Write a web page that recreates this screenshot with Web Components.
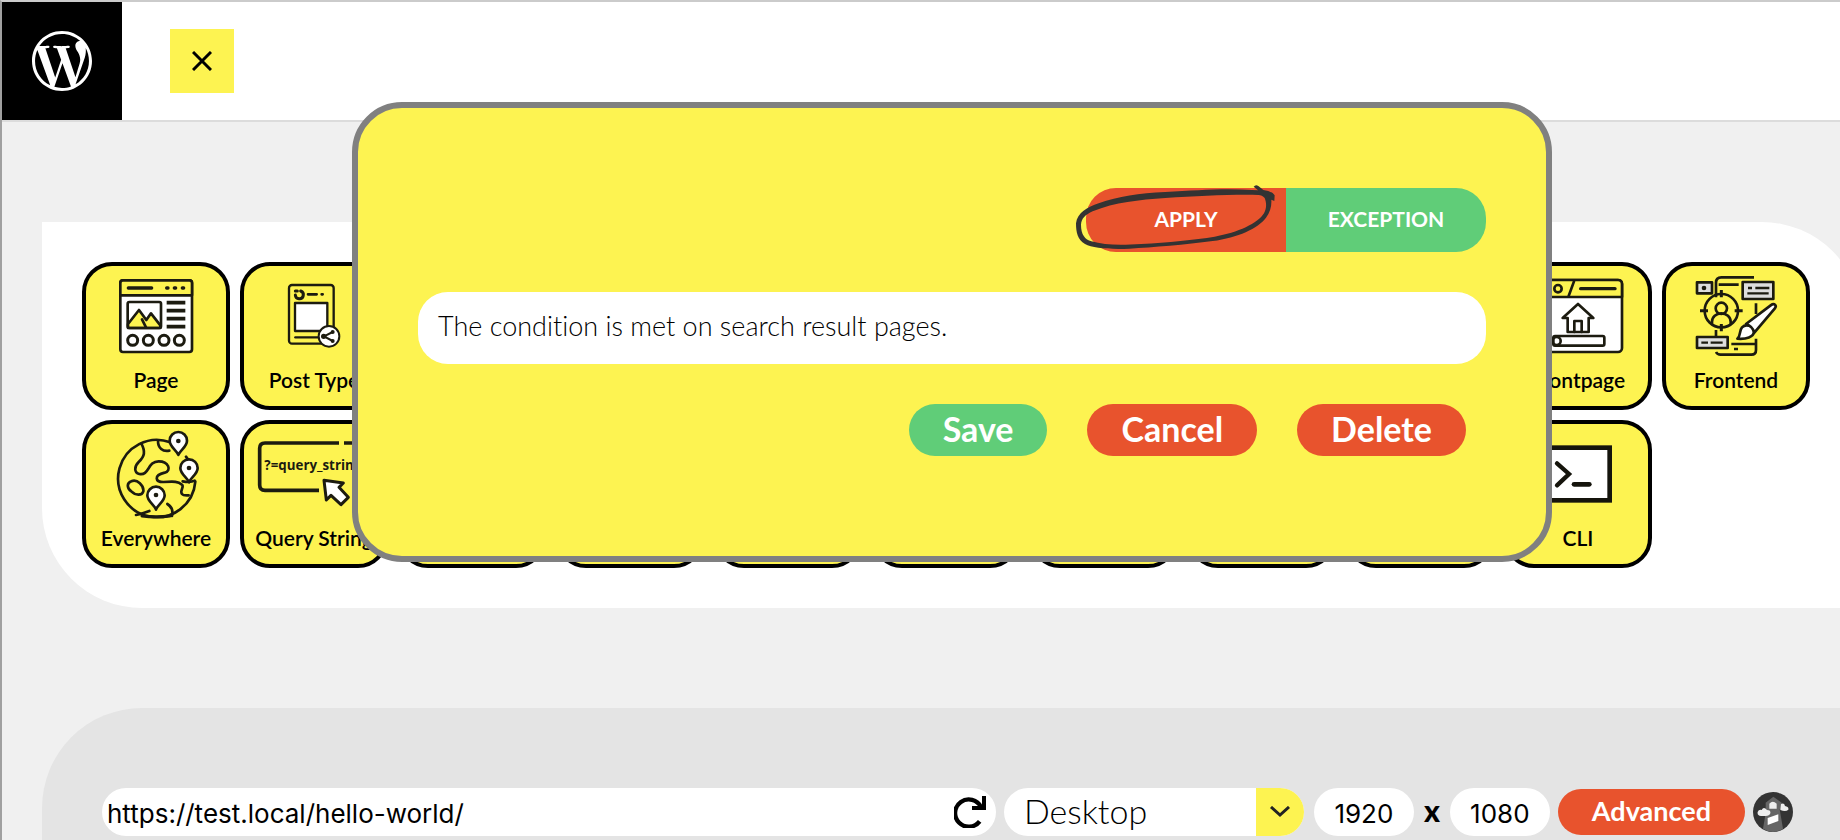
<!DOCTYPE html>
<html lang="en">
<head>
<meta charset="utf-8">
<title>Conditions</title>
<style>
    :root {
        --yellow: #fdf351;
        --red: #e8532d;
        --green: #60cd78;
        --page-bg: #f0f0f0;
        --preview-bg: #e4e4e4;
    }
    html {
        height: 100%;
        overflow: hidden;
        background: var(--page-bg);
    }
    body {
        margin: 0;
        min-height: 100%;
        box-sizing: border-box;
        border-top: 2px solid #cbcbcb;
        border-left: 2px solid #a0a0a0;
        font-family: Lato, "Open Sans", sans-serif;
        font-variant-ligatures: none;
        color: #000;
    }
</style>
</head>
<body>

<condition-app></condition-app>

<template id="icon-page">
    <svg viewBox="78 78 420 276" fill="none" stroke="#1c1b10" stroke-width="8" stroke-linecap="round" stroke-linejoin="round">
        <rect x="181" y="121" width="215" height="215" rx="8" fill="#fff"/>
        <path d="M181 166v-37q0-8 8-8h199q8 0 8 8v37z" fill="#fdf351"/>
        <path d="M205 144h70M320 144h4M343 144h4M367 144h4" stroke-width="10"/>
        <path d="M320 188h56M320 212h56M320 236h56M320 260h56" stroke-width="11" stroke-linecap="butt"/>
        <path d="M204 264v-12l33-42 22 30 14-20 28 36v8z" fill="#fdf351"/>
        <path d="M258 262l-12-24"/>
        <rect x="203" y="186" width="100" height="78" rx="5"/>
        <g stroke-width="9">
            <circle cx="218" cy="301" r="15"/><circle cx="265" cy="301" r="15"/>
            <circle cx="312" cy="301" r="15"/><circle cx="358" cy="301" r="15"/>
        </g>
    </svg>
</template>

<template id="icon-post-type">
    <svg viewBox="552 78 420 276" fill="none" stroke="#1c1b10" stroke-width="7" stroke-linecap="round" stroke-linejoin="round">
        <rect x="687" y="135" width="134" height="176" rx="9"/>
        <path d="M722 153a12 12 0 1 1-16 12M706 153h6" stroke-width="9"/>
        <path d="M744 163h26M785 163h3" stroke-width="8"/>
        <rect x="705" y="189" width="97" height="84" fill="#fff"/>
        <path d="M706 292h70"/>
        <circle cx="807" cy="289" r="31" fill="#fff" stroke-width="6"/>
        <path d="M818 276l-26 13 26 14" stroke-width="6"/>
        <g fill="#1c1b10" stroke="none"><circle cx="818" cy="276" r="6"/><circle cx="791" cy="289" r="8"/><circle cx="818" cy="303" r="6"/></g>
    </svg>
</template>

<template id="icon-everywhere">
    <svg viewBox="78 42 420 276" fill="none" stroke="#1c1b10" stroke-width="8" stroke-linecap="round" stroke-linejoin="round">
        <path d="M331 97a116 116 0 1 0 75 118M378 140q8 10 10 16"/>
        <path d="M244 101c13 24 10 38-8 55-14 14-14 32 2 36 30 6 24-38 58-38 30 0 40 28 18 34-34 8-28 28-4 28 34-2 44-2 56 8 8 8-8 16 0 28 4 5 10 4 20 4M294 94c0 20 14 32 34 28M404 212q-12 6-36 2"/>
        <path d="M214 214c18-8 38 14 36 30-4 14-24 12-36 0-12-8-16-24 0-30zM228 315q20-4 40-12M322 282q20 12 14 36"/>
        <path d="M246 318q42 5 84 0" stroke-width="9"/>
        <g fill="#fff">
            <path d="M355 135c-4-14-26-24-26-43a26 26 0 0 1 52 0c0 19-22 29-26 43z"/>
            <path d="M387 217c-4-14-26-24-26-43a26 26 0 0 1 52 0c0 19-22 29-26 43z"/>
            <path d="M288 299c-4-14-26-24-26-43a26 26 0 0 1 52 0c0 19-22 29-26 43z"/>
        </g>
        <g fill="#1c1b10" stroke="none"><circle cx="355" cy="93" r="7"/><circle cx="387" cy="174" r="7"/><circle cx="288" cy="255" r="7"/></g>
    </svg>
</template>

<template id="icon-query-string">
    <svg viewBox="552 42 420 276" fill="none" stroke="#1c1b10" stroke-width="11" stroke-linecap="butt" stroke-linejoin="round">
        <path d="M837 99H615q-16 0-16 16v110q0 16 16 16h162M852 99h66q16 0 16 16v110q0 16-16 16h-30"/>
        <text x="613" y="180" font-family="'Open Sans', sans-serif" font-size="40" font-weight="700" fill="#1c1b10" stroke="none">?=query_string</text>
        <path d="M792 211l58 8-13 13 28 30-22 22-30-28-14 14z" fill="#fff" stroke-width="9"/>
    </svg>
</template>

<template id="icon-frontpage">
    <svg viewBox="24 168 420 276" fill="none" stroke="#1c1b10" stroke-width="8" stroke-linecap="round" stroke-linejoin="round">
        <rect x="104" y="210" width="262" height="216" rx="12" fill="#fff"/>
        <path d="M104 261v-39q0-12 12-12h238q12 0 12 12v39z" fill="#fdf351"/>
        <circle cx="174" cy="236" r="11"/>
        <path d="M222 214l-16 44"/>
        <path d="M242 236h103" stroke-width="10"/>
        <path d="M203 324h-15l46-42 46 42h-14v42h-63z" fill="#fff"/>
        <path d="M223 366v-33h22v33"/>
        <rect x="160" y="378" width="153" height="29" rx="5"/>
        <circle cx="170" cy="393" r="12"/>
    </svg>
</template>

<template id="icon-frontend">
    <svg viewBox="498 168 420 276" fill="none" stroke="#1c1b10" stroke-width="8" stroke-linecap="butt" stroke-linejoin="round">
        <path d="M648 262v-44q0-16 16-16h98M656 224h60M768 280v32M768 386v34q0 14-14 14h-92q-10 0-14-8M694 402h74M702 417h12M648 360v22"/>
        <rect x="591" y="217" width="45" height="33" fill="#ddd"/>
        <rect x="728" y="216" width="92" height="51" fill="#ddd"/>
        <path d="M744 234h12M766 234h42M742 250h64" stroke-width="7"/>
        <circle cx="612" cy="234" r="7" fill="#1c1b10" stroke="none"/>
        <rect x="591" y="381" width="92" height="33" fill="#ddd"/>
        <path d="M604 398h20M632 398h36" stroke-width="7"/>
        <circle cx="664" cy="302" r="50"/>
        <path d="M664 240v22M664 342v22M600 302h24M704 302h24" stroke-width="9"/>
        <circle cx="664" cy="295" r="17"/>
        <path d="M636 343v-8a28 25 0 0 1 56 0v8"/>
        <path d="M712 386c12-10 4-22 14-34 12-12 36-4 36 12 0 18-24 24-50 22z" fill="#fff"/>
        <path d="M738 342l74-56q8-6 13-2t-1 12l-61 72q-6-20-25-26z" fill="#fff"/>
    </svg>
</template>

<template id="icon-cli">
    <svg viewBox="24 42 420 276" fill="none" stroke="#15140c" stroke-width="14">
        <rect x="132" y="113" width="197" height="158" fill="#fff"/>
        <path d="M171 160l36 32-36 34" stroke-width="13" stroke-linecap="round" stroke-linejoin="miter"/>
        <path d="M222 223h46" stroke-width="14" stroke-linecap="round"/>
    </svg>
</template>

<script>
(function () {
    'use strict';

    // Shadow root with the given markup, shared by all elements below.
    function attach(host, html) {
        const root = host.attachShadow({ mode: 'open' });
        root.innerHTML = html;
        return root;
    }

    customElements.define('app-header', class extends HTMLElement {
        constructor() {
            super();
            attach(this, `
          <style>
            :host {
              display: flex;
              align-items: center;
              gap: 48px;
              background: #fff;
              border-bottom: 2px solid #dcdcdc;
            }
            a {
              display: grid;
              place-items: center;
              width: 120px;
              height: 118px;
              background: #000;
            }
            button {
              display: grid;
              place-items: center;
              width: 64px;
              height: 64px;
              padding: 0;
              border: 0;
              background: var(--yellow);
            }
            svg { display: block; }
          </style>
          <a href="#" aria-label="Dashboard">
            <svg width="60" height="60" viewBox="0 0 24 24" fill="#fff"><path d="M21.469 6.825c.84 1.537 1.318 3.3 1.318 5.175 0 3.979-2.156 7.456-5.363 9.325l3.295-9.527c.615-1.54.82-2.771.82-3.864 0-.405-.026-.78-.07-1.11m-7.981.105c.647-.03 1.232-.105 1.232-.105.582-.075.514-.93-.067-.899 0 0-1.755.135-2.88.135-1.064 0-2.85-.15-2.85-.15-.585-.03-.661.855-.075.885 0 0 .54.061 1.125.09l1.68 4.605-2.37 7.08L5.354 6.9c.649-.03 1.234-.1 1.234-.1.585-.075.516-.93-.065-.896 0 0-1.746.138-2.874.138-.2 0-.438-.008-.69-.015C4.911 3.15 8.235 1.215 12 1.215c2.809 0 5.365 1.072 7.286 2.833-.046-.003-.091-.009-.141-.009-1.06 0-1.812.923-1.812 1.914 0 .89.513 1.643 1.06 2.531.411.72.89 1.643.89 2.977 0 .915-.354 1.994-.821 3.479l-1.075 3.585-3.9-11.61.001.014zM12 22.784c-1.059 0-2.081-.153-3.048-.437l3.237-9.406 3.315 9.087c.024.053.05.101.078.149-1.12.393-2.325.609-3.582.609M1.211 12c0-1.564.336-3.05.935-4.39L7.29 21.709C3.694 19.96 1.212 16.271 1.211 12M12 0C5.385 0 0 5.385 0 12s5.385 12 12 12 12-5.385 12-12S18.615 0 12 0"/></svg>
          </a>
          <button aria-label="Close">
            <svg width="20" height="20" viewBox="0 0 20 20" stroke="#000" stroke-width="3"><path d="M1 1l18 18M19 1L1 19"/></svg>
          </button>
        `);
        }
    });

    customElements.define('condition-tile', class extends HTMLElement {
        constructor() {
            super();
            attach(this, `
          <style>
            :host { display: block; }
            button {
              display: block;
              box-sizing: border-box;
              width: 148px;
              height: 148px;
              padding: 0 0 4px;
              border: 4px solid #000;
              border-radius: 30px;
              background: var(--yellow);
              color: inherit;
              font: 600 21px/44px Lato, sans-serif;
              white-space: nowrap;
            }
            .icon {
              display: block;
              height: 92px;
            }
            svg {
              display: block;
              width: 140px;
              height: 92px;
              overflow: visible;
            }
            .label {
              display: flex;
              justify-content: center;
            }
          </style>
          <button><span class="icon"></span><span class="label"><slot></slot></span></button>
        `);
        }

        connectedCallback() {
            const icon = document.getElementById('icon-' + this.getAttribute('icon'));
            if (icon) {
                this.shadowRoot.querySelector('.icon').replaceChildren(icon.content.cloneNode(true));
            }
        }
    });

    customElements.define('tile-panel', class extends HTMLElement {
        constructor() {
            super();
            attach(this, `
          <style>
            :host {
              display: flex;
              flex-wrap: wrap;
              gap: 10px;
              margin: 100px 40px;
              padding: 40px;
              border-radius: 0 100px 0 100px;
              background: #fff;
            }
          </style>
          <slot></slot>
        `);
        }
    });

    customElements.define('pill-button', class extends HTMLElement {
        constructor() {
            super();
            attach(this, `
          <style>
            :host { display: block; }
            button {
              display: block;
              padding: 0 34px 2px;
              border: 0;
              border-radius: 26px;
              background: var(--red);
              color: #fff;
              font: 700 34px/50px Lato, sans-serif;
            }
            :host([kind="save"]) button { background: var(--green); }
            :host([size="small"]) button {
              border-radius: 23px;
              font-size: 27px;
              line-height: 44px;
            }
          </style>
          <button><slot></slot></button>
        `);
        }
    });

    customElements.define('mode-switch', class extends HTMLElement {
        constructor() {
            super();
            attach(this, `
          <style>
            :host {
              display: grid;
              grid-template-columns: 1fr 1fr;
              position: relative;
              width: 400px;
              height: 64px;
            }
            button {
              padding: 0 0 4px;
              border: 0;
              color: #fff;
              font: 700 21px Lato, sans-serif;
            }
            .apply {
              border-radius: 30px 0 0 30px;
              background: var(--red);
            }
            .exception {
              border-radius: 0 30px 30px 0;
              background: var(--green);
            }
            /* hand-drawn ring round the active side */
            svg {
              position: absolute;
              top: -8px;
              left: -16px;
              width: 216px;
              height: 72px;
              pointer-events: none;
            }
          </style>
          <button class="apply" aria-pressed="true">APPLY</button>
          <button class="exception" aria-pressed="false">EXCEPTION</button>
          <svg viewBox="60 30 648 216" fill="#333">
            <path d="M611 50q6-8 14-2l15 12q24 2 34 16l-1 17-9-4q2 30-16 54c-24 32-84 60-160 70-80 11-180 19-250 23-60 3-110-2-133-14-22-12-27-34-27-62 4-32 34-48 68-60 60-22 120-30 200-34 100-6 180-12 260-6l18 1zM124 214c40 12 90 12 150 8 80-5 160-12 220-22 70-12 130-40 148-70 8-14 8-32 2-46-5-5-12-9-18-9-90-2-180 4-280 9-80 6-150 12-218 40-22 10-34 22-35 40 0 30 12 44 31 50z"/>
          </svg>
        `);
        }
    });

    customElements.define('condition-dialog', class extends HTMLElement {
        constructor() {
            super();
            attach(this, `
          <style>
            :host {
              box-sizing: border-box;
              position: absolute;
              top: 100px;
              left: calc(50% - 600px);
              width: 1200px;
              padding: 80px 60px 100px;
              border: 6px solid #808080;
              border-radius: 50px;
              background: var(--yellow);
            }
            mode-switch { margin-left: auto; }
            p {
              margin: 40px 0;
              padding: 0 20px 4px;
              border-radius: 30px;
              background: #fff;
              font-size: 27px;
              font-weight: 300;
              line-height: 68px;
            }
            .actions {
              display: flex;
              justify-content: flex-end;
              gap: 40px;
              padding-right: 20px;
            }
          </style>
          <mode-switch></mode-switch>
          <p><slot></slot></p>
          <div class="actions">
            <pill-button kind="save">Save</pill-button>
            <pill-button>Cancel</pill-button>
            <pill-button>Delete</pill-button>
          </div>
        `);
        }

        connectedCallback() {
            this.setAttribute('role', 'dialog');
        }
    });

    customElements.define('preview-bar', class extends HTMLElement {
        constructor() {
            super();
            attach(this, `
          <style>
            :host {
              display: flex;
              align-items: center;
              gap: 8px;
              min-height: 48px;
              margin: 0 40px;
              padding: 80px 69px 4px 60px;
              border-top-left-radius: 100px;
              background: var(--preview-bg);
            }
            .url {
              display: flex;
              flex: 1;
              align-items: center;
              height: 48px;
              padding: 0 10px 0 5px;
              border-radius: 24px;
              background: #fff;
            }
            input {
              box-sizing: border-box;
              min-width: 0;
              padding: 2px 0 0;
              border: 0;
              background: none;
              color: #000;
              font: 26px Inter, sans-serif;
            }
            .url input { flex: 1; }
            .url button {
              display: block;
              padding: 0;
              border: 0;
              background: none;
            }
            svg { display: block; }
            .device {
              display: grid;
              width: 300px;
              height: 48px;
              border-radius: 24px;
              overflow: hidden;
              background: #fff;
            }
            .device > * { grid-area: 1 / 1; }
            select {
              appearance: none;
              padding: 0 20px 4px;
              border: 0;
              background: none;
              color: #000;
              font: 300 34px Lato, sans-serif;
            }
            .arrow {
              display: grid;
              place-items: center;
              justify-self: end;
              width: 48px;
              background: var(--yellow);
              pointer-events: none;
            }
            .size {
              display: flex;
              align-items: center;
              gap: 10px;
              margin-left: 2px;
              font: 900 30px/40px Lato, sans-serif;
            }
            .size span { padding-bottom: 4px; }
            .size input {
              width: 100px;
              height: 48px;
              border-radius: 24px;
              background: #fff;
              text-align: center;
            }
          </style>
          <div class="url">
            <input type="text" aria-label="URL" value="https://test.local/hello-world/">
            <button aria-label="Reload">
              <svg width="32" height="32" viewBox="0 0 96 96" fill="none" stroke="#000" stroke-width="13">
                <path d="M77 76A41 41 0 1 1 81 33"/>
                <path d="M90 0v36H54" stroke-width="12"/>
              </svg>
            </button>
          </div>
          <div class="device">
            <select aria-label="Device"><option>Desktop</option></select>
            <span class="arrow">
              <svg width="20" height="12" viewBox="0 0 20 12" fill="none" stroke="#222" stroke-width="3"><path d="M1 1l9 8 9-8"/></svg>
            </span>
          </div>
          <div class="size">
            <input type="text" aria-label="Width" value="1920">
            <span>x</span>
            <input type="text" aria-label="Height" value="1080">
          </div>
          <pill-button size="small">Advanced</pill-button>
          <svg width="40" height="40" viewBox="0 0 120 120">
            <circle cx="60" cy="60" r="60" fill="#333"/>
            <path d="M38 32l23-18 25 18v20h-6l10 58q-30 20-60 0l10-58h-2z" fill="#666"/>
            <path d="M49 50V35q10-12 22 0v15z" fill="#eee"/>
            <path d="M44 78l32-11v20l-32 12z" fill="#fff"/>
            <path d="M24 72q-12-2-10-12 3-8 12-6 6-12 16 0 12 0 10 10-3 8-14 8zM82 54l2-18q10-4 12 6 12 2 10 11-8 8-24 1z" fill="#eee"/>
          </svg>
        `);
        }
    });

    customElements.define('condition-app', class extends HTMLElement {
        constructor() {
            super();
            attach(this, `
          <style>
            :host {
              display: block;
              position: relative;
              /* content runs past the right edge of the window */
              margin-right: -62px;
            }
          </style>
          <app-header></app-header>
          <tile-panel>
            <condition-tile icon="page">Page</condition-tile>
            <condition-tile icon="post-type">Post Type</condition-tile>
            ${'<condition-tile></condition-tile>'.repeat(7)}
            <condition-tile icon="frontpage">Frontpage</condition-tile>
            <condition-tile icon="frontend">Frontend</condition-tile>
            <condition-tile icon="everywhere">Everywhere</condition-tile>
            <condition-tile icon="query-string">Query String</condition-tile>
            ${'<condition-tile></condition-tile>'.repeat(7)}
            <condition-tile icon="cli">CLI</condition-tile>
          </tile-panel>
          <preview-bar></preview-bar>
          <condition-dialog>The condition is met on search result pages.</condition-dialog>
        `);
        }
    });

})();
</script>
</body>
</html>
